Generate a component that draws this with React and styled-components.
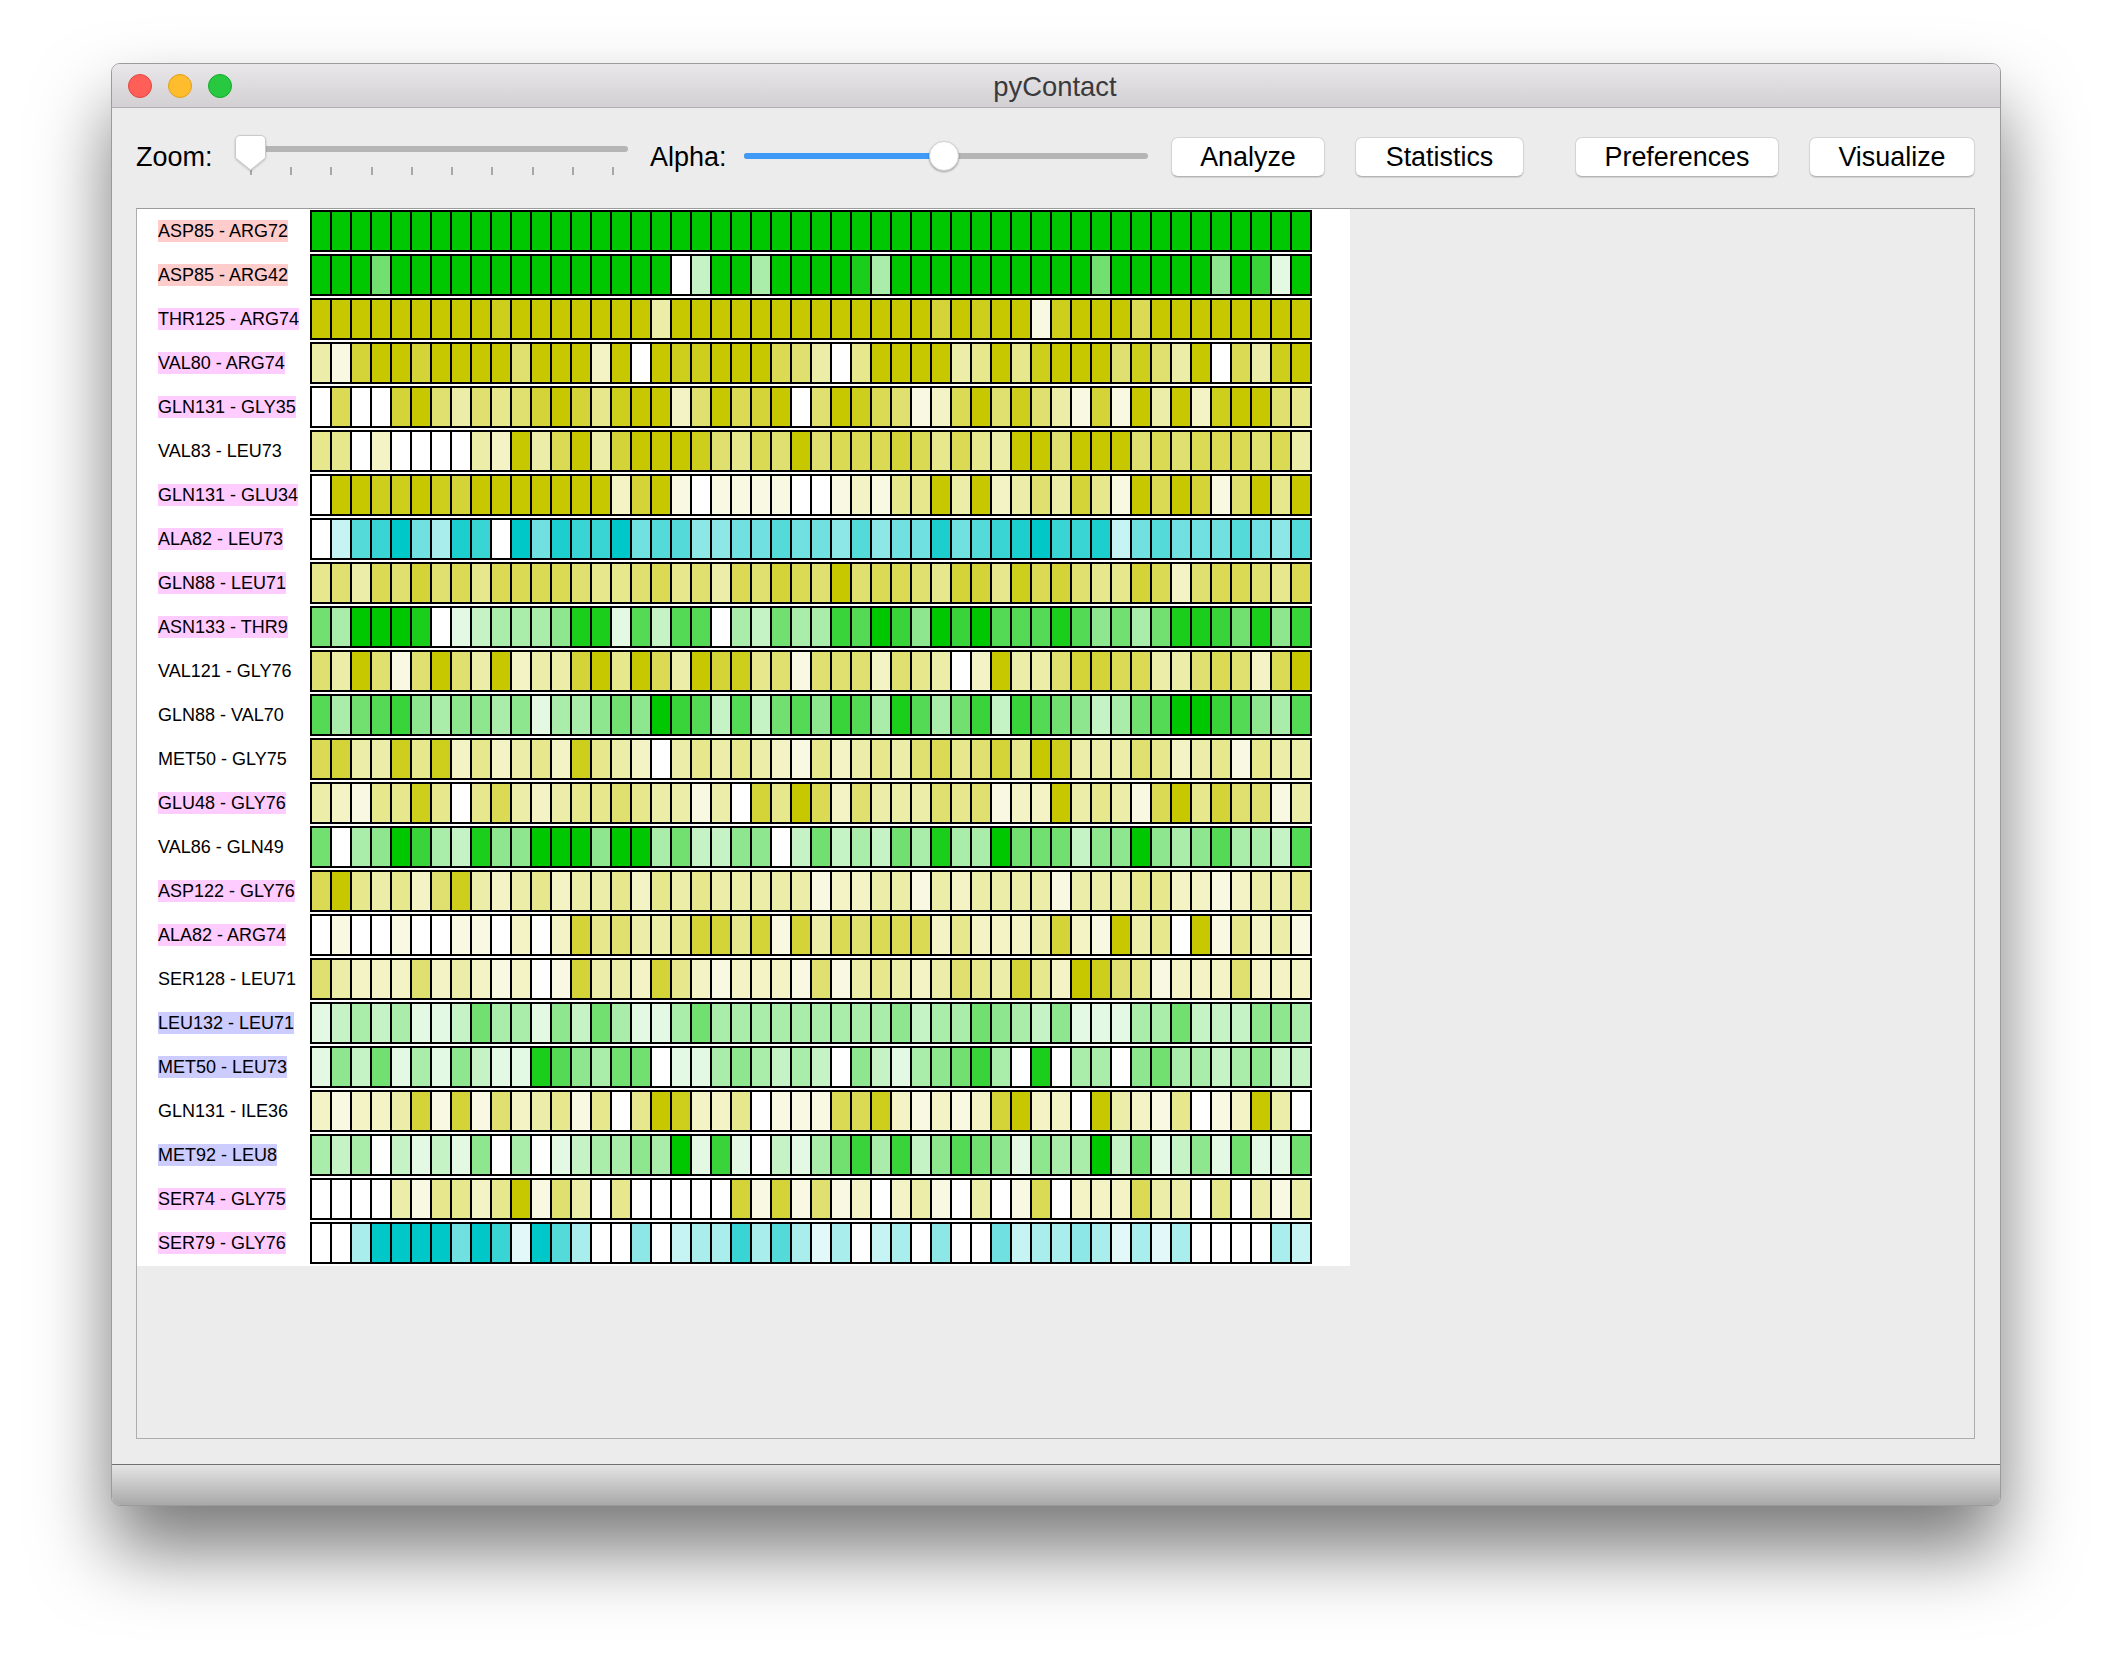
import React from "react";
import styled, { createGlobalStyle } from "styled-components";

const TONES = {
  green: [0, 200, 0],
  yellow: [200, 200, 0],
  cyan: [0, 200, 200],
};

const MARKS = { red: "#ffcccc", pink: "#ffccff", blue: "#ccccff" };

// label, bar tone, label highlight, occupancy of each of the 50 frames (0-9)
const CONTACTS = [
  ["ASP85 - ARG72", "green", "red", "99999999999999999999999999 999999999999999999999999"],
  ["ASP85 - ARG42", "green", "red", "99959999999999999902993999 983999999999959999949719"],
  ["THR125 - ARG74", "yellow", "pink", "99999999989999999399999999 999997989918999699999999"],
  ["VAL80 - ARG74", "yellow", "pink", "31799799995999290988999653 049999349489995853906389"],
  ["GLN131 - GLY35", "yellow", "pink", "06007953545797489925967905 986512695853171939289954"],
  ["VAL83 - LEU73", "yellow", null, "44020000329369379998546595 666764643995999565666563"],
  ["GLN131 - GLU34", "yellow", "pink", "09988987999999927910111100 121449392353741969715949"],
  ["ALA82 - LEU73", "cyan", "pink", "02679538709587795664455655 464558567897782565556546"],
  ["GLN88 - LEU71", "yellow", "pink", "45365756466665445645365765 956654774867544762566546"],
  ["ASN133 - THR9", "green", "pink", "53999801233348816266032533 769749796668645358875847"],
  ["VAL121 - GLY76", "yellow", null, "53951595392337949639784515 552543029335776633565269"],
  ["GLN88 - VAL70", "green", null, "63567434434133454976262564 763863572765423569976436"],
  ["MET50 - GLY75", "yellow", null, "67338482423428432034343214 234356457498333542341433"],
  ["GLU48 - GLY76", "yellow", "pink", "32144840463234454331307496 253335451229343169475513"],
  ["VAL86 - GLN49", "green", null, "50349732844999499352244025 232538339555244943463326"],
  ["ASP122 - GLY76", "yellow", "pink", "69434258323423342434333331 223313233331333442212334"],
  ["ALA82 - ARG74", "yellow", "pink", "01001001102027453347747173 656662422237219340914231"],
  ["SER128 - LEU71", "yellow", null, "53222523212017332742122215 134323543742985412225222"],
  ["LEU132 - LEU71", "green", "blue", "12323112533142531135333333 333423354324111335222443"],
  ["MET50 - LEU73", "green", "blue", "14251314211864355011343232 042134573080330453323422"],
  ["GLN131 - ILE36", "yellow", null, "21223717152341404982240111 668212127922093214012930"],
  ["MET92 - LEU8", "green", "blue", "32302121403012334391710213 573724654143392512415115"],
  ["SER74 - GLY75", "yellow", "pink", "00003144249153040000071715 120231030160222633040313"],
  ["SER79 - GLY76", "cyan", "pink", "00399995971963004023373631 302304005233431313000032"],
];

function shade(tone, level) {
  const t = level / 9;
  const [r, g, b] = TONES[tone];
  const mix = (c) => Math.round(255 + (c - 255) * t);
  return `rgb(${mix(r)}, ${mix(g)}, ${mix(b)})`;
}

function App() {
  return (
    <>
      <GlobalStyle />
      <Window>
        <TitleBar>
          <Lights>
            <Light $fill="#ff5f57" $edge="#e2463f" />
            <Light $fill="#ffbd2e" $edge="#e1a116" />
            <Light $fill="#28c940" $edge="#12ac28" />
          </Lights>
          <Title>pyContact</Title>
        </TitleBar>
        <Body>
          <Toolbar>
            <ZoomLabel>Zoom:</ZoomLabel>
            <ZoomSlider>
              <ZoomTrack />
              <Ticks>
                {Array.from({ length: 10 }, (_, i) => (
                  <Tick key={i} />
                ))}
              </Ticks>
              <ZoomThumb width="33" height="38" viewBox="0 0 33 38">
                <path
                  d="M6 1.5h21a4.5 4.5 0 0 1 4.5 4.5v16.5a3 3 0 0 1-1 2.2L16.5 36 2.5 24.7a3 3 0 0 1-1-2.2V6A4.5 4.5 0 0 1 6 1.5z"
                  fill="#fff"
                  stroke="#c9c9c9"
                />
              </ZoomThumb>
            </ZoomSlider>
            <AlphaLabel>Alpha:</AlphaLabel>
            <AlphaSlider>
              <AlphaTrack>
                <AlphaFill $width={200} />
              </AlphaTrack>
              <AlphaThumb $left={185} />
            </AlphaSlider>
            <Button $left={23} $width={154}>Analyze</Button>
            <Button $left={30} $width={169}>Statistics</Button>
            <Button $left={51} $width={204}>Preferences</Button>
            <Button $left={30} $width={166}>Visualize</Button>
          </Toolbar>
          <Panel>
            <Plot>
              {CONTACTS.map(([label, tone, mark, frames]) => (
                <Row key={label}>
                  <RowLabel>
                    <LabelText $mark={mark}>{label}</LabelText>
                  </RowLabel>
                  <Bar>
                    {frames
                      .replace(" ", "")
                      .split("")
                      .map((level, i) => (
                        <Cell key={i} $color={shade(tone, Number(level))} />
                      ))}
                  </Bar>
                </Row>
              ))}
            </Plot>
          </Panel>
        </Body>
        <Footer />
      </Window>
    </>
  );
}

const GlobalStyle = createGlobalStyle`
  html, body {
    margin: 0;
    height: 1666px;
    overflow: hidden;
    background: #fff;
    font-family: "Liberation Sans", Arial, sans-serif;
  }
  * {
    box-sizing: border-box;
  }
`;

const Window = styled.div`
  display: flex;
  flex-direction: column;
  width: 1890px;
  height: 1443px;
  margin: 63px 0 0 111px;
  border: 1px solid #9b9b9b;
  border-radius: 9px;
  background: #ececec;
  box-shadow: 0 44px 76px rgba(0, 0, 0, 0.53);
`;

const TitleBar = styled.div`
  position: relative;
  flex: none;
  display: flex;
  align-items: center;
  justify-content: center;
  height: 44px;
  padding: 2px 2px 0 0;
  border-bottom: 1px solid #b1afb1;
  border-radius: 8px 8px 0 0;
  background: linear-gradient(#e9e7e9, #d2d0d2);
`;

const Lights = styled.div`
  position: absolute;
  left: 16px;
  top: 10px;
  display: flex;
  gap: 16px;
`;

const Light = styled.span`
  width: 24px;
  height: 24px;
  border-radius: 50%;
  background: ${(p) => p.$fill};
  border: 1px solid ${(p) => p.$edge};
`;

const Title = styled.div`
  font-size: 27.4px;
  line-height: 40px;
  color: #3a3a3c;
`;

const Body = styled.div`
  flex: 1;
  display: flex;
  flex-direction: column;
  min-height: 0;
  padding: 0 25px 25px 24px;
  background: #ececec;
`;

const Toolbar = styled.div`
  flex: none;
  display: flex;
  align-items: flex-start;
  height: 100px;
  padding-top: 26px;
`;

const FieldLabel = styled.div`
  flex: none;
  margin-top: 3px;
  font-size: 27px;
  line-height: 40px;
  color: #000;
`;

const ZoomLabel = styled(FieldLabel)`
  width: 98px;
`;

const AlphaLabel = styled(FieldLabel)`
  width: 94px;
  margin-left: 22px;
`;

const ZoomSlider = styled.div`
  position: relative;
  flex: none;
  width: 394px;
  height: 50px;
  padding-top: 12px;
`;

const ZoomTrack = styled.div`
  height: 6px;
  margin-left: 8px;
  border-radius: 3px;
  background: #b5b5b5;
`;

const Ticks = styled.div`
  display: flex;
  justify-content: space-between;
  width: 380px;
  margin-top: 15px;
  padding-left: 16px;
`;

const Tick = styled.span`
  width: 2px;
  height: 8px;
  background: #a8a8a8;
`;

const ZoomThumb = styled.svg`
  position: absolute;
  left: 0;
  top: 0;
  filter: drop-shadow(0 1px 1px rgba(0, 0, 0, 0.2));
`;

const AlphaSlider = styled.div`
  position: relative;
  flex: none;
  display: flex;
  align-items: center;
  width: 404px;
  height: 30px;
  margin-top: 7px;
`;

const AlphaTrack = styled.div`
  width: 100%;
  height: 6px;
  border-radius: 3px;
  overflow: hidden;
  background: #b5b5b5;
`;

const AlphaFill = styled.div`
  width: ${(p) => p.$width}px;
  height: 100%;
  background: #3f99f7;
`;

const AlphaThumb = styled.div`
  position: absolute;
  left: ${(p) => p.$left}px;
  top: 0;
  width: 30px;
  height: 30px;
  border-radius: 50%;
  background: #fff;
  border: 1px solid #d4d4d4;
  box-shadow: 0 1px 2px rgba(0, 0, 0, 0.35);
`;

const Button = styled.div`
  flex: none;
  width: ${(p) => p.$width}px;
  height: 40px;
  margin: 3px 0 0 ${(p) => p.$left}px;
  border: 1px solid #d4d4d4;
  border-bottom-color: #b4b4b4;
  border-radius: 7px;
  background: #fff;
  box-shadow: 0 1px 1px rgba(0, 0, 0, 0.12);
  font-size: 26.9px;
  line-height: 38px;
  text-align: center;
  color: #000;
`;

const Panel = styled.div`
  flex: 1;
  min-height: 0;
  border: 1px solid #adadad;
  border-top-color: #9c9c9c;
  background: #ececec;
`;

const Plot = styled.div`
  display: flex;
  flex-direction: column;
  gap: 2px;
  width: 1213px;
  padding: 1px 0 2px;
  background: #fff;
`;

const Row = styled.div`
  display: flex;
  align-items: stretch;
  height: 42px;
`;

const RowLabel = styled.div`
  flex: none;
  display: flex;
  align-items: center;
  width: 173px;
  padding-left: 21px;
`;

const LabelText = styled.span`
  font-size: 18px;
  line-height: 22px;
  white-space: nowrap;
  color: #000;
  background: ${(p) => (p.$mark ? MARKS[p.$mark] : "transparent")};
`;

const Bar = styled.div`
  flex: none;
  display: flex;
  gap: 2px;
  width: 1002px;
  border: 2px solid #000;
  background: #000;
`;

const Cell = styled.div`
  flex: none;
  width: 18px;
  height: 38px;
  background: ${(p) => p.$color};
`;

const Footer = styled.div`
  flex: none;
  height: 41px;
  border-top: 1px solid #6f6f6f;
  border-radius: 0 0 8px 8px;
  background: linear-gradient(#e4e4e4, #a9a9a9);
`;

export default App;
